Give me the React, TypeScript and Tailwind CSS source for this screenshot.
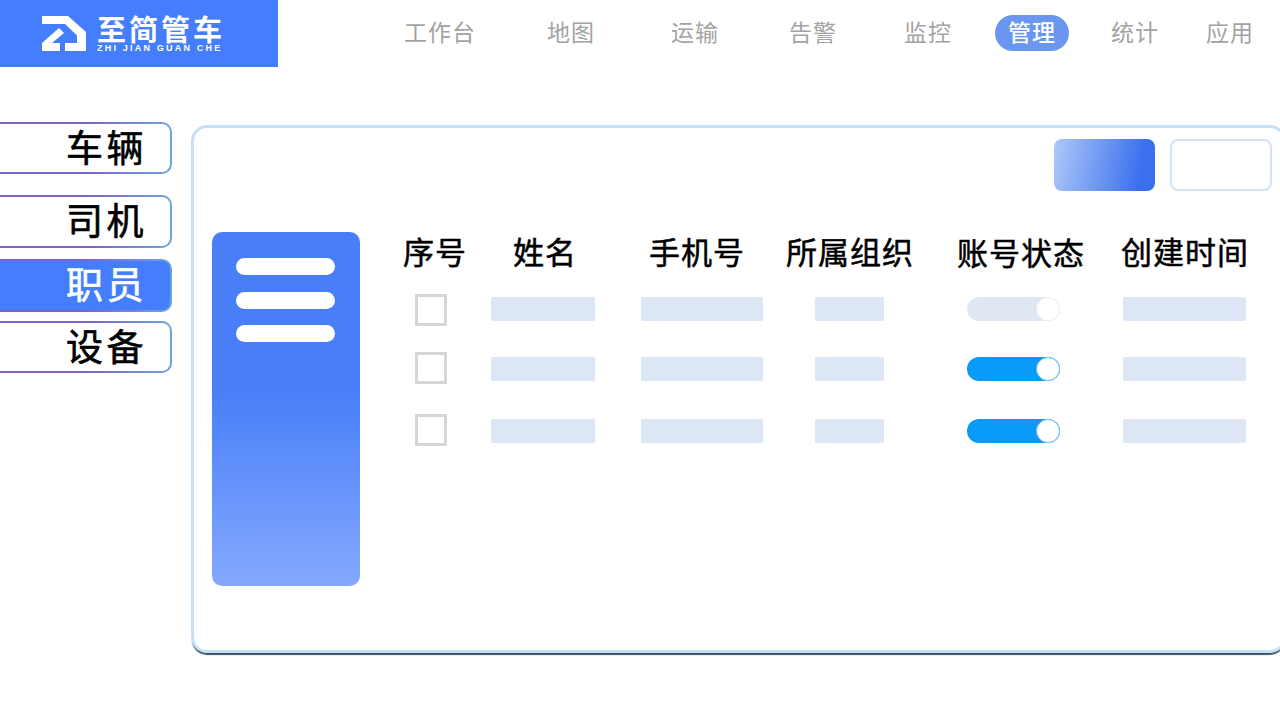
const navItems = [
  { label: "工作台", cls: "w-[71px] ml-[126px]" },
  { label: "地图", cls: "w-[47px] ml-[72px]" },
  { label: "运输", cls: "w-[47px] ml-[77px]" },
  { label: "告警", cls: "w-[47px] ml-[71px]" },
  { label: "监控", cls: "w-[47px] ml-[68px]" },
];

const sideItems = [
  { label: "车辆", cls: "mt-[55px] h-[52px]" },
  { label: "司机", cls: "mt-[21px] h-[53px]" },
  { label: "职员", cls: "mt-[11px] h-[53px]", active: true },
  { label: "设备", cls: "mt-[9px] h-[52px]" },
];

const columns = [
  { label: "序号", cls: "w-[88px]" },
  { label: "姓名", cls: "w-[158px] pl-[22px]" },
  { label: "手机号", cls: "w-[137px]" },
  { label: "所属组织", cls: "w-[171px]" },
  { label: "账号状态", cls: "w-[164px] pt-[1px]" },
  { label: "创建时间", cls: "" },
];

const rows = [
  { cls: "mt-[19px]", box: "mt-[1px]", on: false },
  { cls: "mt-[28px]", box: "-mt-[1px]", on: true },
  { cls: "mt-[30px]", box: "-mt-[1px]", on: true },
];

function Bar({ cls }: { cls: string }) {
  return <div className={`h-6 rounded-[2px] bg-[#dce6f4] ${cls}`} />;
}

function Toggle({ on }: { on: boolean }) {
  return (
    <div className={`flex h-6 w-[93px] justify-end rounded-full ${on ? "bg-[#0a9bf8]" : "bg-[#dfe7f3]"}`}>
      <div className={`size-6 rounded-full bg-white ${on ? "border border-[#7cc0ee]" : "border border-[#edf1f7]"}`} />
    </div>
  );
}

export default function App() {
  return (
    <div className="h-[720px] w-[1280px] overflow-hidden bg-white font-['Noto_Sans_CJK_SC',sans-serif]">
      <header className="flex h-[67px] items-start">
        <div className="flex h-[67px] w-[278px] shrink-0 bg-[#457efc] pl-[41px] pt-[16px] text-white">
          <svg width="46" height="36" viewBox="0 0 46 36" fill="#fff" className="shrink-0">
            <path d="M1 0H27L45 16V35H24V27H36V19.5L24 8H1Z" />
            <path d="M18 12L1 27V35H19V27H11L23 17Z" />
          </svg>
          <div className="ml-[10px] -mt-[3px]">
            <div className="whitespace-nowrap text-[29px] leading-[30px] font-bold tracking-[3px]">至简管车</div>
            <div className="whitespace-nowrap font-['Liberation_Sans',sans-serif] text-[9px] leading-[10px] font-bold tracking-[2.2px]">ZHI JIAN GUAN CHE</div>
          </div>
        </div>
        {navItems.map((item) => (
          <div key={item.label} className={`mt-[13px] h-9 shrink-0 whitespace-nowrap text-[23px] leading-9 tracking-[1px] text-[#a3a3a3] ${item.cls}`}>
            {item.label}
          </div>
        ))}
        <div className="ml-[44px] mt-[15px] flex h-9 w-[74px] shrink-0 items-center justify-center rounded-full bg-[#6b96f0] pb-1 text-[23px] leading-9 tracking-[1px] font-medium text-white">
          管理
        </div>
        <div className="ml-[42px] mt-[13px] h-9 shrink-0 whitespace-nowrap text-[23px] leading-9 tracking-[1px] text-[#a3a3a3]">统计</div>
        <div className="ml-[47px] mt-[13px] h-9 shrink-0 whitespace-nowrap text-[23px] leading-9 tracking-[1px] text-[#a3a3a3]">应用</div>
      </header>

      <main className="flex">
        <nav className="w-[172px] shrink-0">
          {sideItems.map((item) => (
            <div key={item.label} className={`rounded-r-[10px] bg-gradient-to-r from-[#7d63c4] from-50% to-[#6aa5de] py-[2px] pr-[2px] ${item.cls}`}>
              <div className={`flex h-full items-center rounded-r-[8px] pb-[4px] pl-[66px] text-[37px] leading-none tracking-[3.5px] [-webkit-text-stroke:0.6px] ${item.active ? "bg-[#457efc] text-white" : "bg-white text-black"}`}>
                {item.label}
              </div>
            </div>
          ))}
        </nav>

        <section className="ml-[19px] mt-[58px] h-[528px] w-[1095px] shrink-0 rounded-[16px] border-[3px] border-[#c6e0f7] bg-white pl-[18px] pr-[11px] pt-[11px] shadow-[0_3px_1px_-1px_#3f5064]">
          <div className="flex justify-end gap-[15px]">
            <div className="h-[52px] w-[101px] rounded-[8px] bg-[linear-gradient(100deg,#aec8f8,#3a6fee_85%)]" />
            <div className="h-[52px] w-[102px] rounded-[8px] border-2 border-[#d5e5f6] bg-white" />
          </div>

          <div className="mt-[41px] flex">
            <div className="flex h-[354px] w-[148px] shrink-0 flex-col gap-[16.5px] rounded-[10px] bg-gradient-to-b from-[#487ff8] from-45% to-[#85a8fd] px-6 pt-[26px]">
              <div className="h-[17px] w-[99px] rounded-full bg-white" />
              <div className="h-[17px] w-[99px] rounded-full bg-white" />
              <div className="h-[17px] w-[99px] rounded-full bg-white" />
            </div>

            <div className="ml-[43px] flex-1">
              <div className="flex h-[42px] items-center">
                {columns.map((col) => (
                  <div key={col.label} className={`-mt-[4px] shrink-0 whitespace-nowrap text-[31px] leading-[42px] tracking-[1px] text-black [-webkit-text-stroke:0.5px] ${col.cls}`}>
                    {col.label}
                  </div>
                ))}
              </div>
              {rows.map((row, i) => (
                <div key={i} className={`flex h-8 items-center ${row.cls}`}>
                  <div className={`ml-[12px] size-8 shrink-0 self-start border-[3px] border-[#d6d6d6] ${row.box}`} />
                  <Bar cls="ml-[44px] w-[104px] shrink-0" />
                  <Bar cls="ml-[46px] w-[122px] shrink-0" />
                  <Bar cls="ml-[52px] w-[69px] shrink-0" />
                  <div className="ml-[83px] shrink-0"><Toggle on={row.on} /></div>
                  <Bar cls="ml-[63px] w-[123px] shrink-0" />
                </div>
              ))}
            </div>
          </div>
        </section>
      </main>
    </div>
  );
}
